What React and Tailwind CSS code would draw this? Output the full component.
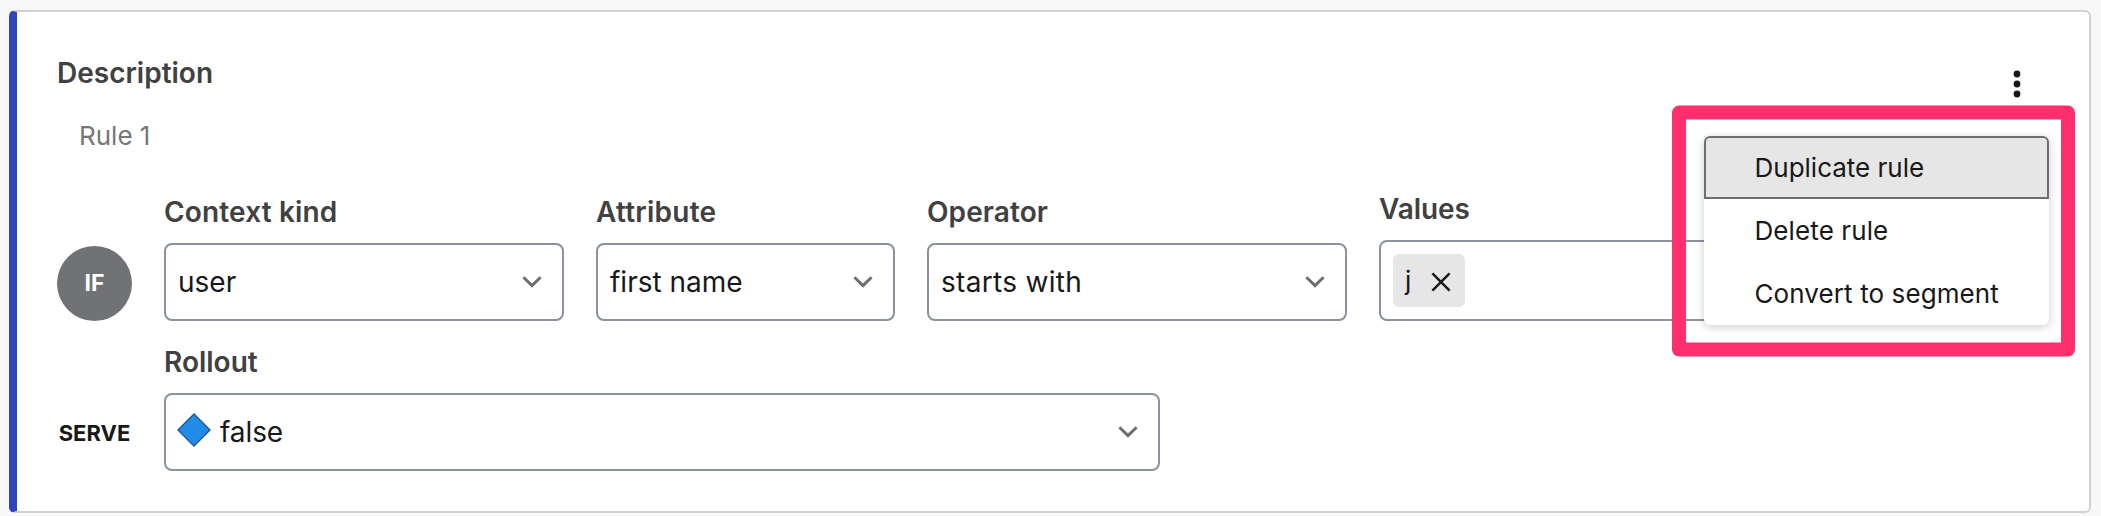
function Chevron() {
  return (
    <svg className="h-5 w-6 shrink-0" viewBox="0 0 24 20" fill="none" stroke="#6c6e72" strokeWidth="3">
      <path d="M3.4 5.2 L12 13.6 L20.6 5.2" />
    </svg>
  );
}

function Label({ children, className = "" }) {
  return (
    <div className={`h-[34px] text-[28px] leading-[35px] font-semibold text-[#414141] ${className}`}>{children}</div>
  );
}

function Select({ label, labelClass, width, children }) {
  return (
    <div className={`flex flex-col gap-[14px] ${width}`}>
      <Label className={labelClass}>{label}</Label>
      <div className="flex h-[78px] items-center justify-between rounded-lg border-2 border-[#89929e] pr-[18px] pl-3 text-[28px]">
        {children}
        <Chevron />
      </div>
    </div>
  );
}

function MenuItem({ active, children }) {
  return (
    <div
      className={`flex h-[63px] items-center border-2 pl-[48.5px] text-[26px] ${
        active ? "rounded-t-md border-[#6c6e72] bg-[#e6e6e6]" : "border-transparent tracking-[0.1px]"
      }`}
    >
      {children}
    </div>
  );
}

export default function App() {
  return (
    <div className="h-[516px] bg-[#f8f8f8] pt-[10px] pr-[10px] pl-[9px] font-['Inter',sans-serif] text-[#181818]">
      <div className="relative flex h-[503px] flex-col rounded-md border-2 border-l-8 border-[#d1d1d1] border-l-[#3044be] bg-white pt-11 pl-10">
        <div className="flex h-[96px] justify-between">
          <div className="flex flex-col">
            <Label>Description</Label>
            <div className="mt-[30px] ml-[22px] h-8 text-[26px] leading-8 text-[#757679]">Rule 1</div>
          </div>
          <svg className="mt-[12px] mr-[66px] h-8 w-[12px]" viewBox="0 0 12 32" fill="#181818">
            <circle cx="6" cy="6" r="3.4" />
            <circle cx="6" cy="16" r="3.4" />
            <circle cx="6" cy="26" r="3.4" />
          </svg>
        </div>

        <div className="mt-[40px] flex h-[129px] items-end gap-8">
          <div className="flex size-[75px] items-center justify-center rounded-full bg-[#717276] text-[23px] font-bold text-white">
            IF
          </div>
          <Select label="Context kind" labelClass="tracking-[0.15px]" width="w-[400px]">
            <span>user</span>
          </Select>
          <Select label="Attribute" labelClass="tracking-[0.25px]" width="w-[299px]">
            <span>first name</span>
          </Select>
          <Select label="Operator" labelClass="tracking-[0.1px]" width="w-[420px]">
            <span className="tracking-[0.3px]">starts with</span>
          </Select>
          <div className="flex w-[640px] flex-col gap-[14px]">
            <Label className="-tracking-[0.1px]">Values</Label>
            <div className="flex h-[81px] items-center rounded-lg border-2 border-[#89929e] pl-3">
              <div className="flex h-[53px] w-[72px] items-center justify-between rounded-md bg-[#e6e6e6] pr-[14px] pl-3 text-[26px]">
                <span>j</span>
                <svg className="mt-[2px] size-5" viewBox="0 0 20 20" fill="none" stroke="#181818" strokeWidth="2.5">
                  <path d="M1.4 1.4 L18.6 18.6 M18.6 1.4 L1.4 18.6" />
                </svg>
              </div>
            </div>
          </div>
        </div>

        <div className="mt-6 flex items-end gap-8">
          <div className="flex h-[76px] w-[75px] items-center justify-center text-[22px] font-bold">SERVE</div>
          <Select label="Rollout" width="w-[996px]">
            <span className="-ml-px flex items-center gap-[9px]">
              <svg className="-mt-[5px] size-[34px]" viewBox="0 0 34 34" fill="#218be6" stroke="#165a94" strokeWidth="1.4">
                <path d="M17 1 L33 17 L17 33 L1 17 Z" />
              </svg>
              <span className="-tracking-[0.1px]">false</span>
            </span>
          </Select>
        </div>

        <div className="absolute top-[124px] right-[40px] w-[345px] rounded-md bg-white shadow-[0_2px_10px_rgba(0,0,0,0.2)]">
          <MenuItem active>Duplicate rule</MenuItem>
          <MenuItem>Delete rule</MenuItem>
          <MenuItem>Convert to segment</MenuItem>
        </div>
        <svg className="absolute top-[93px] right-[14px] h-[253px] w-[403px]" viewBox="0 0 403 253" fill="none">
          <rect
            x="7"
            y="7.6"
            width="389"
            height="237"
            stroke="#ff2f6d"
            strokeWidth="14"
            strokeLinejoin="round"
          />
        </svg>
      </div>
    </div>
  );
}
